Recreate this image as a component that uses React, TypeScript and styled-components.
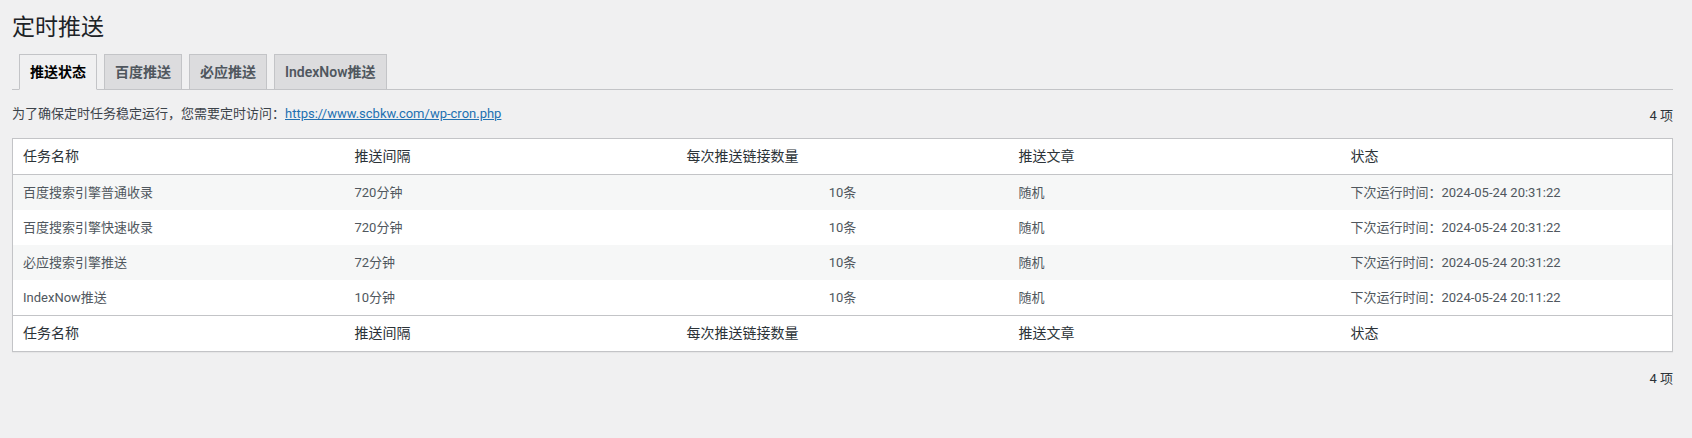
import React from "react";
import styled, { createGlobalStyle } from "styled-components";

const GlobalStyle = createGlobalStyle`
  html, body {
    margin: 0;
    padding: 0;
    background: #f0f0f1;
  }
  body {
    font-family: Roboto, "Noto Sans CJK SC", "Noto Sans", sans-serif;
    font-size: 13px;
    line-height: 1.4em;
    color: #3c434a;
  }
  * { box-sizing: border-box; }
`;

const Wrap = styled.div`
  margin: 0 19px 0 12px;
`;

const Title = styled.h1`
  font-size: 23px;
  font-weight: 400;
  line-height: 1.3;
  margin: 0;
  padding: 13px 0 4px;
  color: #1d2327;
`;

const TabBar = styled.nav`
  display: flex;
  align-items: flex-end;
  border-bottom: 1px solid #c3c4c7;
  padding-top: 7px;
  padding-left: 7px;
`;

const Tab = styled.a<{ $active?: boolean; $first?: boolean }>`
  display: block;
  margin-left: ${(p) => (p.$first ? 0 : 7)}px;
  margin-bottom: -1px;
  padding: 5px 10px;
  font-size: 14px;
  font-weight: 600;
  line-height: 24px;
  border: 1px solid #c3c4c7;
  border-bottom-color: ${(p) => (p.$active ? "#f0f0f1" : "#c3c4c7")};
  background: ${(p) => (p.$active ? "#f0f0f1" : "#dcdcde")};
  color: ${(p) => (p.$active ? "#000" : "#50575e")};
  text-decoration: none;
  white-space: nowrap;
`;

const InfoRow = styled.div`
  display: flex;
  justify-content: space-between;
  align-items: center;
  height: 30px;
  margin: 9px 0 9px;
`;

const Notice = styled.p`
  margin: 0;
  font-size: 13px;
  color: #3c434a;
`;

const Link = styled.a`
  color: #2271b1;
  text-decoration: underline;
`;

const Count = styled.span`
  font-size: 13px;
  color: #2c3338;
  padding-top: 4px;
`;

const BottomNav = styled.div`
  display: flex;
  justify-content: flex-end;
  align-items: center;
  height: 30px;
  margin: 10px 0 4px;
`;

const Table = styled.table`
  width: 100%;
  border-collapse: collapse;
  table-layout: fixed;
  background: #fff;
  border: 1px solid #c3c4c7;
  box-shadow: 0 1px 1px rgba(0, 0, 0, 0.04);
`;

const HeadCell = styled.th`
  text-align: left;
  font-weight: 400;
  font-size: 14px;
  line-height: 19px;
  height: 35px;
  padding: 8px 10px;
  color: #2c3338;
`;

const HeadRow = styled.tr<{ $foot?: boolean }>`
  border-bottom: ${(p) => (p.$foot ? "none" : "1px solid #c3c4c7")};
  border-top: ${(p) => (p.$foot ? "1px solid #c3c4c7" : "none")};
`;

const BodyRow = styled.tr<{ $alt: boolean }>`
  background: ${(p) => (p.$alt ? "#f6f7f7" : "#fff")};
`;

const Cell = styled.td<{ $center?: boolean }>`
  font-size: 13px;
  line-height: 19px;
  height: 35px;
  padding: 8px 10px;
  color: #50575e;
  text-align: ${(p) => (p.$center ? "center" : "left")};
  white-space: nowrap;
`;

const headers = ["任务名称", "推送间隔", "每次推送链接数量", "推送文章", "状态"];

const rows = [
  ["百度搜索引擎普通收录", "720分钟", "10条", "随机", "下次运行时间：2024-05-24 20:31:22"],
  ["百度搜索引擎快速收录", "720分钟", "10条", "随机", "下次运行时间：2024-05-24 20:31:22"],
  ["必应搜索引擎推送", "72分钟", "10条", "随机", "下次运行时间：2024-05-24 20:31:22"],
  ["IndexNow推送", "10分钟", "10条", "随机", "下次运行时间：2024-05-24 20:11:22"],
];

const tabs = ["推送状态", "百度推送", "必应推送", "IndexNow推送"];

export default function App() {
  return (
    <>
      <GlobalStyle />
      <Wrap>
        <Title>定时推送</Title>
        <TabBar>
          {tabs.map((t, i) => (
            <Tab key={t} href="#" $active={i === 0} $first={i === 0}>
              {t}
            </Tab>
          ))}
        </TabBar>
        <InfoRow>
          <Notice>
            为了确保定时任务稳定运行，您需要定时访问：
            <Link href="#">https://www.scbkw.com/wp-cron.php</Link>
          </Notice>
          <Count>4 项</Count>
        </InfoRow>
        <Table>
          <thead>
            <HeadRow>
              {headers.map((h) => (
                <HeadCell key={h}>{h}</HeadCell>
              ))}
            </HeadRow>
          </thead>
          <tbody>
            {rows.map((r, i) => (
              <BodyRow key={i} $alt={i % 2 === 0}>
                {r.map((c, j) => (
                  <Cell key={j} $center={j === 2}>
                    {c}
                  </Cell>
                ))}
              </BodyRow>
            ))}
          </tbody>
          <tfoot>
            <HeadRow $foot>
              {headers.map((h) => (
                <HeadCell key={h}>{h}</HeadCell>
              ))}
            </HeadRow>
          </tfoot>
        </Table>
        <BottomNav>
          <Count>4 项</Count>
        </BottomNav>
      </Wrap>
    </>
  );
}
